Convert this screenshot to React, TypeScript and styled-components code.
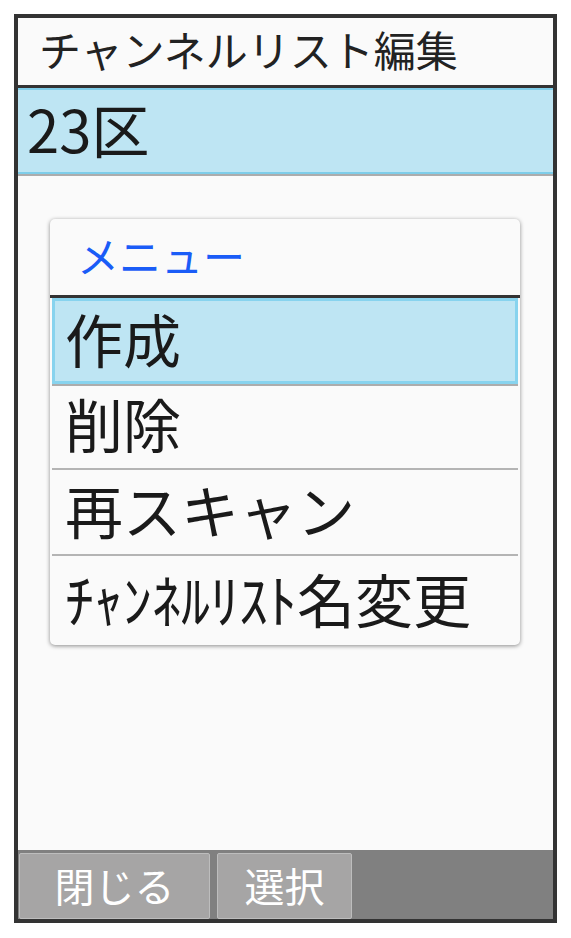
import styled, { createGlobalStyle } from "styled-components";

const GlobalStyle = createGlobalStyle`
  html, body {
    margin: 0;
    padding: 0;
    background: #ffffff;
  }
  body {
    font-family: "Noto Sans CJK JP", "Noto Sans", sans-serif;
  }
`;

const menuItems = ["作成", "削除", "再スキャン", "ﾁｬﾝﾈﾙﾘｽﾄ名変更"];

const App = () => {
  return (
    <>
      <GlobalStyle />
      <Frame>
        <Header>チャンネルリスト編集</Header>
        <ChannelRow>23区</ChannelRow>
        <Content>
          <Menu>
            <MenuTitle>メニュー</MenuTitle>
            {menuItems.map((item, idx) => (
              <MenuItem key={`menu_${idx}`} $selected={idx === 0} $last={idx === menuItems.length - 1}>
                {item}
              </MenuItem>
            ))}
          </Menu>
        </Content>
        <SoftKeyBar>
          <SoftKey $width={191}>閉じる</SoftKey>
          <SoftKey $width={135}>選択</SoftKey>
        </SoftKeyBar>
      </Frame>
    </>
  );
};

export default App;

const Frame = styled.div`
  display: flex;
  flex-direction: column;
  box-sizing: border-box;
  width: 543px;
  height: 909px;
  margin: 14px 0 0 14px;
  border: 4px solid #333333;
  background: #fafafa;
  overflow: hidden;
`;
const Header = styled.div`
  display: flex;
  align-items: center;
  box-sizing: border-box;
  height: 70px;
  padding: 0 0 5px 21px;
  font-size: 42px;
  line-height: 1;
  color: #222222;
  border-bottom: 3px solid #333333;
  white-space: nowrap;
`;
const ChannelRow = styled.div`
  display: flex;
  align-items: center;
  box-sizing: border-box;
  height: 86px;
  padding: 0 0 6px 9px;
  background: #bee5f3;
  border-top: 2px solid #7ecde9;
  border-bottom: 2px solid #7ecde9;
  box-shadow: 0 2px 0 #acacac;
  font-size: 58px;
  line-height: 1;
  color: #1a1a1a;
`;
const Content = styled.div`
  flex: 1;
  padding: 45px 0 0 32px;
`;
const Menu = styled.div`
  display: flex;
  flex-direction: column;
  width: 470px;
  background: #fafafa;
  border-radius: 5px;
  box-shadow: 0 1px 4px rgba(0, 0, 0, 0.45);
  overflow: hidden;
`;
const MenuTitle = styled.div`
  display: flex;
  align-items: center;
  box-sizing: border-box;
  height: 79px;
  padding: 0 0 4px 27px;
  font-size: 42px;
  line-height: 1;
  color: #1a5cf7;
  border-bottom: 3px solid #333333;
`;
const MenuItem = styled.div<{ $selected: boolean; $last: boolean }>`
  display: flex;
  align-items: center;
  box-sizing: border-box;
  height: ${(p) => (p.$last ? 89 : 86)}px;
  margin: 0 2px;
  padding: 0 0 6px ${(p) => (p.$selected ? 10 : 13)}px;
  font-size: 58px;
  line-height: 1;
  color: #1a1a1a;
  background: ${(p) => (p.$selected ? "#bee5f3" : "transparent")};
  border: ${(p) => (p.$selected ? "3px solid #87d3ee" : "none")};
  border-bottom: ${(p) =>
    p.$last ? "none" : p.$selected ? "3px solid #87d3ee" : "2px solid #b4b4b4"};
  box-shadow: ${(p) => (p.$selected ? "0 2px 0 #acacac" : "none")};
  white-space: nowrap;
`;
const SoftKeyBar = styled.div`
  display: flex;
  gap: 7px;
  height: 69px;
  box-sizing: border-box;
  padding: 3px 0 0 1px;
  background: #808080;
`;
const SoftKey = styled.div<{ $width: number }>`
  display: flex;
  align-items: center;
  justify-content: center;
  box-sizing: border-box;
  width: ${(p) => p.$width}px;
  height: 66px;
  padding-bottom: 2px;
  background: #a6a5a5;
  border: 1px solid #bdbdbd;
  border-radius: 2px;
  font-size: 40px;
  line-height: 1;
  color: #ffffff;
`;
